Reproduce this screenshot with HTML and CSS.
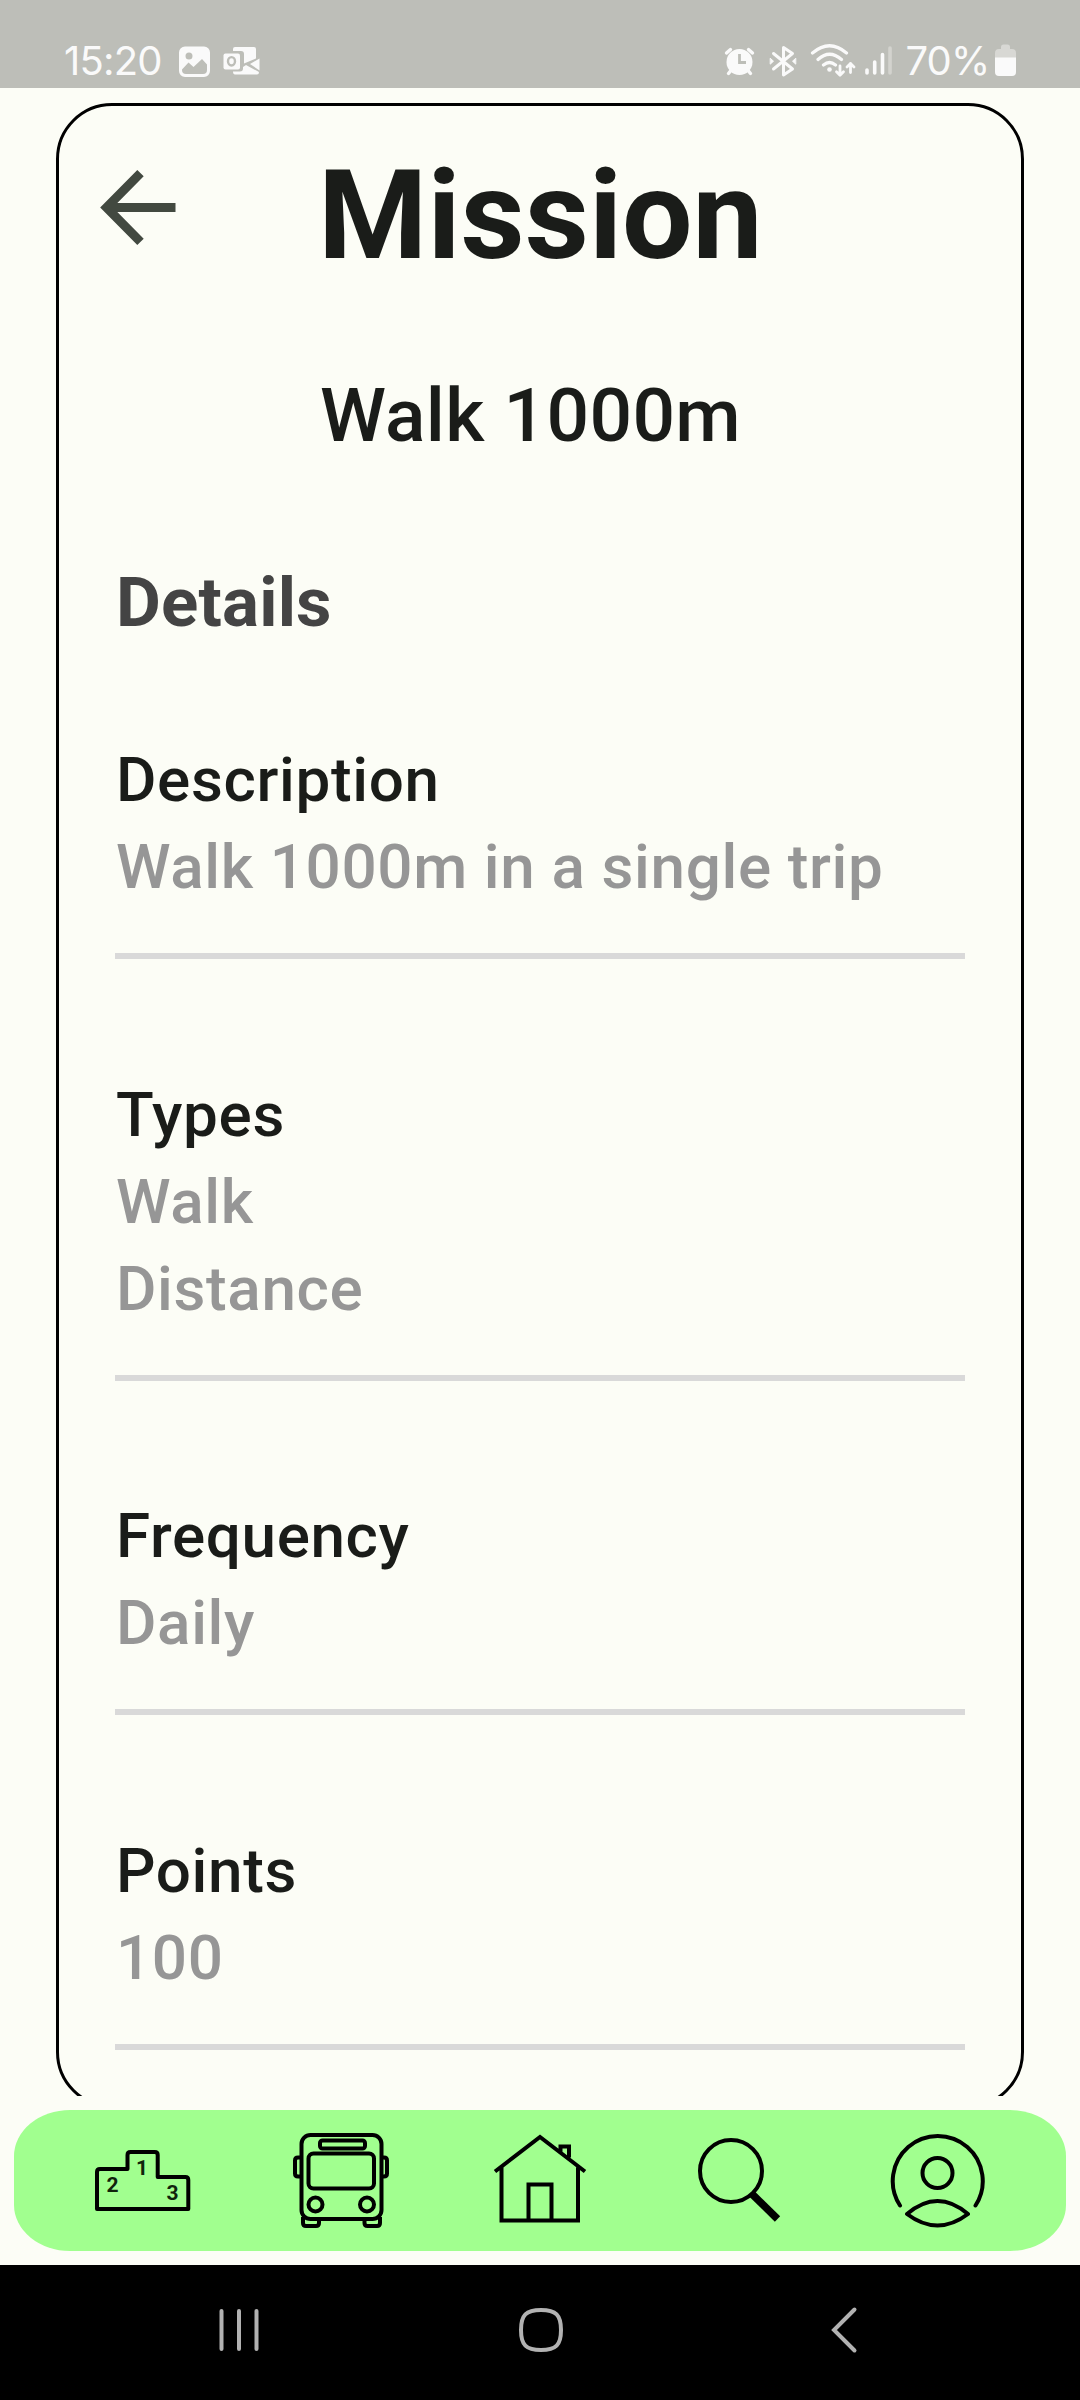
FILE: index.html
```html
<!DOCTYPE html>
<html lang="en">
<head>
<meta charset="utf-8">
<title>Mission</title>
<link rel="stylesheet" href="styles.css">
</head>
<body>
<div class="screen">
  <header class="status">
    <span class="clock">15:20</span>
    <svg class="status-left" viewBox="176 40 90 44" width="90" height="44">
      <path fill="#fafafa" fill-rule="evenodd" d="M185 46.500h19a6 6 0 0 1 6 6v18.500a6 6 0 0 1-6 6h-19a6 6 0 0 1-6-6v-18.500a6 6 0 0 1 6-6zM182 69.500v.500q0 4 4 4h17q4 0 4-4v-5.500l-5-5.500-8.500 8-5-4.500zM185.500 56a3.500 3.500 0 1 0 7 0a3.500 3.500 0 1 0-7 0z"/>
      <path fill="#fafafa" d="M235 47h19q2 0 2 2v9.500l-12 5V54q0-3-3-3h-8v-2q0-2 2-2z"/>
      <path fill="#fafafa" d="M250 64l9.500-5.500v12zM243 67l3-2 13 7q0 2.500-2 2.500h-22q-2 0-2-3h7q3 0 3-3z"/>
      <rect x="223.500" y="53.500" width="16.500" height="16" rx="2" fill="#fafafa"/>
      <ellipse cx="231.500" cy="61.300" rx="3.500" ry="4.200" fill="none" stroke="#bdbeb8" stroke-width="2.400"/>
    </svg>
    <svg class="status-right" viewBox="720 40 176 44" width="176" height="44" fill="none" stroke="#fafafa" stroke-linecap="round" stroke-linejoin="round">
      <circle cx="739.500" cy="62" r="13" fill="#fafafa" stroke="none"/>
      <path stroke-width="3.400" d="M726.500 53l4-3.500M752.500 53l-4-3.500M730.500 71l-2 2.500M748.500 71l2 2.500"/>
      <path stroke="#bdbeb8" stroke-width="2.800" stroke-linecap="butt" stroke-linejoin="miter" d="M739.500 54v8.500h6.500"/>
      <path stroke-width="3" d="M773.500 53.500l19 15.500-9 6V47.500l9 6-19 15.500"/>
      <path fill="#fafafa" stroke-width="1" d="M770.500 58.500l3 2.700-3 2.700zM795.500 58.500l-3 2.700 3 2.700z"/>
      <path stroke-width="3.200" d="M812.500 53Q829.500 38.500 846.500 53M818 59.500Q829.500 49 841.500 59.500M823.500 65Q829.500 60 835.500 65"/>
      <circle cx="829.500" cy="69.500" r="2.300" fill="#fafafa" stroke="none"/>
      <path stroke-width="2.800" d="M840 66v9M836.500 71.700l3.500 3.500 3.500-3.500M850.500 72.500v-9M847 67l3.500-3.500 3.500 3.500"/>
      <path stroke-width="3.600" d="M867 70v3M874.700 62v11M882.500 54.500v18.500"/>
      <path stroke-width="3.600" stroke="#d3d3ce" d="M890 48v25"/>
    </svg>
    <span class="percent">70%</span>
    <svg class="battery" viewBox="994 44 23 33" width="23" height="33">
      <path fill="#d8d8d4" d="M1001 47q0-2.500 2.500-2.500h4q2.500 0 2.500 2.500v2h2q4 0 4 4v5H995v-5q0-4 4-4h2z"/>
      <path fill="#fafafa" d="M995 57.500h21v14.500q0 4-4 4h-13q-4 0-4-4z"/>
    </svg>
  </header>

  <main class="view">
    <section class="card">
      <div class="title-row">
        <svg class="back" viewBox="0 0 76 78" width="76" height="78"><path d="M75.500 38.500H8M40.500 4.200L6.500 38.500l34 34.300" fill="none" stroke="#424940" stroke-width="9"/></svg>
        <h1 class="title">Mission</h1>
      </div>
      <h2 class="name">Walk 1000m</h2>
      <h3 class="details">Details</h3>
      <div class="field"><b>Description</b><span>Walk 1000m in a single trip</span></div>
      <div class="field"><b>Types</b><span>Walk</span><span>Distance</span></div>
      <div class="field"><b>Frequency</b><span>Daily</span></div>
      <div class="field"><b>Points</b><span>100</span></div>
    </section>
  </main>

  <nav class="tabs">
    <svg class="tab" viewBox="92 2130 100 100" width="100" height="100" fill="none" stroke="#000" stroke-width="4" stroke-linejoin="round">
      <path d="M97 2209v-37q0-3 3-3h27.500v-14q0-3 3-3h24.200q3 0 3 3v22h27.600q3 0 3 3v29z"/>
      <g class="rank"><text x="112.500" y="2192">2</text><text x="142" y="2174.500">1</text><text x="172.500" y="2200">3</text></g>
    </svg>
    <svg class="tab" viewBox="291 2130 100 100" width="100" height="100" fill="none" stroke="#000" stroke-width="4">
      <rect x="301.500" y="2135" width="80" height="84" rx="9"/>
      <rect x="320" y="2140.500" width="45" height="8" rx="2.500"/>
      <rect x="308.500" y="2153.500" width="65.500" height="35" rx="5"/>
      <circle cx="315.500" cy="2204.500" r="7"/><circle cx="367" cy="2204.500" r="7"/>
      <path d="M301 2157.500h-3q-3 0-3 3v13q0 3 3 3h3M382 2157.500h2q3 0 3 3v13q0 3-3 3h-2M303 2217v6q0 3 3 3h10q3 0 3-3v-4M364.500 2219v4q0 3 3 3h9.500q3 0 3-3v-6"/>
    </svg>
    <svg class="tab" viewBox="490 2130 100 100" width="100" height="100" fill="none" stroke="#000" stroke-width="4">
      <path d="M495 2171.500l45-34.500 45 34.500M501.500 2167.500v53h76.500v-53M528.500 2220v-35.500h23v35.500M560.500 2152v-5.500h8.500v11"/>
    </svg>
    <svg class="tab" viewBox="689 2130 100 100" width="100" height="100" fill="none" stroke="#000">
      <ellipse cx="731" cy="2171" rx="31" ry="31" stroke-width="4"/><path stroke-width="7.500" d="M752 2194l25.500 25"/>
    </svg>
    <svg class="tab" viewBox="888 2130 100 100" width="100" height="100" fill="none" stroke="#000" stroke-width="4" stroke-linecap="round" stroke-linejoin="round">
      <path d="M900 2205.500a45 45 0 1 1 75.500 0M907 2214q30.500-26 61 0q-30.500 23-61 0z"/><circle cx="937.500" cy="2173" r="15"/>
    </svg>
  </nav>

  <footer class="system">
    <svg viewBox="214 2300 50 60" width="50" height="60" stroke="#b2b2b2" stroke-width="4" stroke-linecap="round"><path d="M221.500 2311v38M239 2311v38M256.500 2311v38"/></svg>
    <svg viewBox="516 2300 50 60" width="50" height="60" fill="none" stroke="#b2b2b2" stroke-width="4"><path d="M541 2310c15 0 20 5 20 20s-5 20-20 20-20-5-20-20 5-20 20-20z"/></svg>
    <svg viewBox="818 2300 50 60" width="50" height="60" fill="none" stroke="#b2b2b2" stroke-width="4" stroke-linecap="round"><path d="M854.500 2309.500l-20.500 20.500 20.500 20.500"/></svg>
  </footer>
</div>
</body>
</html>
```
FILE: styles.css
```css
* { box-sizing: border-box; }
body { margin: 0; background: #fcfdf6; font-family: Roboto, sans-serif; }
svg { display: block; flex: none; }
.screen { width: 1080px; height: 2400px; display: flex; flex-direction: column; overflow: hidden; }

.status { height: 88px; flex: none; background: #bdbeb8; display: flex; align-items: flex-start; padding: 40px 63px 0 64px; color: #fafafa; font: 400 40px/42px Inter, sans-serif; white-space: nowrap; }
.clock { width: 118px; letter-spacing: -.8px; }
.status-right { margin-left: 454px; }
.percent { width: 93px; margin-left: 9px; letter-spacing: -.8px; }
.battery { margin: 4px 0 0; }

.view { height: 2008px; flex: none; overflow: hidden; padding: 15px 56px 0; }
.card { height: 2005px; border: 3px solid #000; border-radius: 56px; padding: 0 57px; }
.title-row { height: 200px; display: flex; align-items: flex-start; padding-top: 37px; margin-left: -16px; }
.back { margin-top: 26px; }
.title { margin: 0 0 0 142px; font-size: 125px; line-height: 146px; font-weight: 700; color: #1a1c19; }
.name { margin: 64px 0 0 204px; font-size: 75px; line-height: 90px; font-weight: 500; letter-spacing: .3px; color: #1a1c19; }
.details { margin: 98px 0 0; font-size: 69px; line-height: 90px; font-weight: 700; letter-spacing: .2px; color: #444; }
.field { width: 850px; margin-left: -1px; border-bottom: 6px solid #d9d9d9; display: flex; flex-direction: column; padding: 0 0 43px 1px; margin-top: 111.600px; font-size: 62px; line-height: 87px; font-weight: 500; letter-spacing: .63px; white-space: nowrap; }
.details + .field { margin-top: 88px; }
.field b { font-weight: 500; color: #1a1c19; }
.field span { color: #969696; }

.tabs { height: 141px; flex: none; margin: 14px; background: #a1ff8f; border-radius: 56px / 46px; display: flex; align-items: flex-start; gap: 99px; padding: 20px 78px; }
.rank { fill: #10240c; stroke: none; font: 700 21px Roboto, sans-serif; text-anchor: middle; }

.system { flex: 1; background: #000; display: flex; justify-content: space-between; padding: 35px 212px 0 214px; }
```
